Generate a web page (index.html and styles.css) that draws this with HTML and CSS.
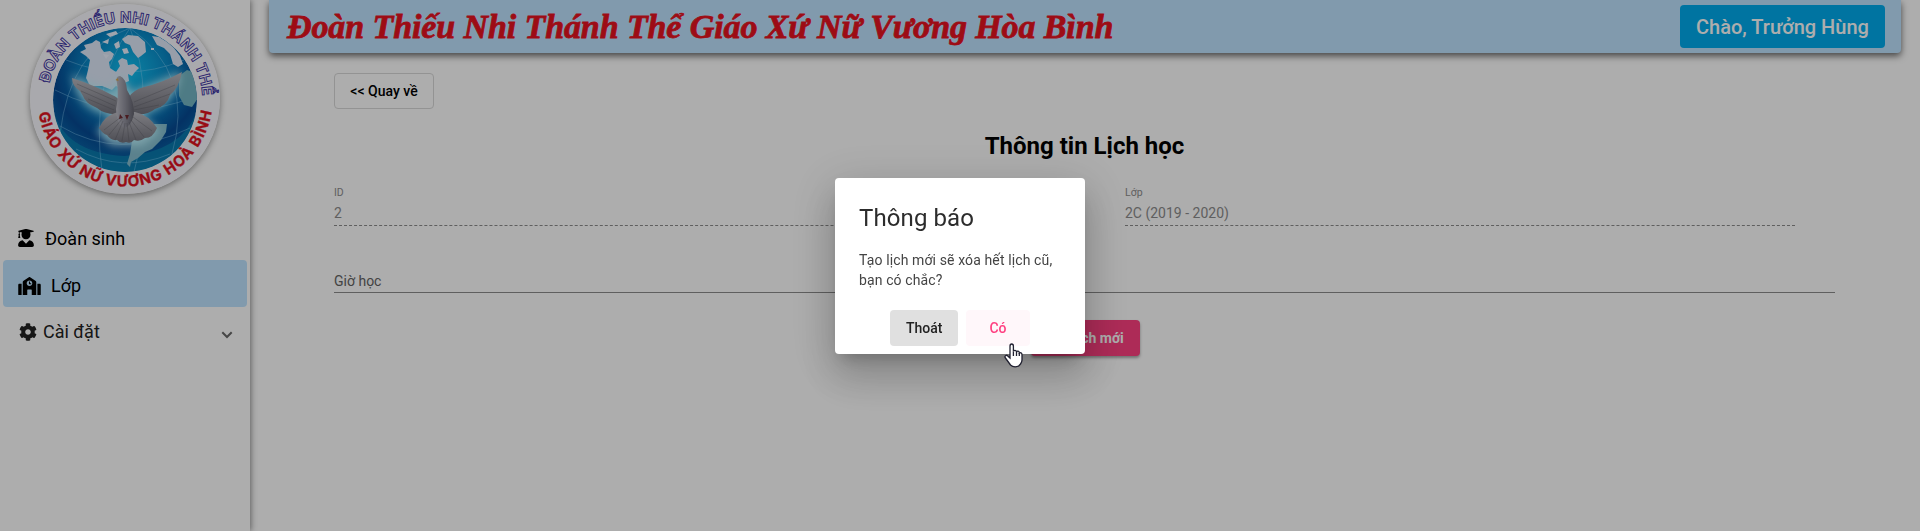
FILE: index.html
```html
<!DOCTYPE html>
<html lang="vi">
<head>
<meta charset="utf-8">
<title>Thông tin Lịch học</title>
<link rel="stylesheet" href="styles.css">
</head>
<body>
<div class="app">
  <aside class="sidebar">
    <svg class="logo" viewBox="0 0 190 190" width="190" height="190">
      <defs>
        <radialGradient id="sea" cx=".52" cy=".3" r=".68">
          <stop offset="0" stop-color="#12c2f2"/>
          <stop offset=".4" stop-color="#0a8cca"/>
          <stop offset=".75" stop-color="#064a94"/>
          <stop offset="1" stop-color="#0b6fae"/>
        </radialGradient>
        <linearGradient id="wing" x1="0" y1="0" x2="0" y2="1">
          <stop offset="0" stop-color="#b9b9c0"/>
          <stop offset="1" stop-color="#72727c"/>
        </linearGradient>
        <linearGradient id="body" x1="0" y1="0" x2="1" y2="0">
          <stop offset="0" stop-color="#bcbcc6"/>
          <stop offset=".5" stop-color="#92929e"/>
          <stop offset="1" stop-color="#62626e"/>
        </linearGradient>
        <clipPath id="globe"><circle cx="95" cy="96" r="72"/></clipPath>
        <filter id="glow" x="-30%" y="-30%" width="160%" height="160%"><feGaussianBlur stdDeviation="4"/></filter>
        <path id="arcTop" d="M17.6 92A77.5 77.5 0 0 1 172.4 92"/>
        <path id="arcBottom" d="M7.5 95A87.5 87.5 0 0 0 182.5 95"/>
      </defs>
      <circle cx="95" cy="95" r="95" fill="#fafaff"/>
      <g clip-path="url(#globe)">
        <circle cx="95" cy="96" r="72" fill="url(#sea)"/>
        <path d="M22 100Q30 148 94 152Q154 148 168 104L166 170H26Z" fill="#0a86b4" opacity=".7"/>
        <g fill="none" stroke="#9bdcff" stroke-width=".7" opacity=".55">
          <path d="M100 24Q60 80 72 167M100 24Q40 45 30 130M100 24Q125 90 104 168M100 24Q165 70 142 150M36 56Q95 80 154 56M25 86Q95 122 166 92M30 122Q90 158 160 124M46 145Q92 170 140 150"/>
        </g>
        <path d="M50 48L56 45L54 41L62 39L66 36L70 38L71 44L74 48L80 47L84 50L82 55L79 58L80 64L86 68L90 62L88 57L92 54L97 56L98 61L104 60L109 64L105 68L102 72L98 70L99 77L92 80L90 84L86 82L82 86L72 82L60 82L56 74L58 66L60 56L56 52Z" fill="#dfe9fa"/>
        <path d="M92 35L98 31L108 32L115 38L116 48L111 52L108 54L103 48L100 41L95 39ZM122 32L129 33L137 38L144 44L150 52L153 60L148 63L143 60L140 50L134 44L127 41Z" fill="#dfe9fa"/>
        <path d="M76 30L86 27L88 30L80 33ZM72 38L79 35L78 40ZM84 40L89 37L90 43L86 45ZM92 45L97 44L99 49L94 50ZM73 50L79 51L76 55ZM121 44L124 44L124 46L121 46Z" fill="#eaf2ff"/>
        <path d="M149 72L157 66L163 68L168 94L162 103L154 101L149 92Z" fill="#74b6c4"/>
        <path d="M102 137L112 126L122 120L137 120L136 128L131 136L122 145L115 148L108 154L101 158L100 163L97 160L100 150Z" fill="#86bfd0"/>
        <path d="M44 73Q60 83 82 88L90 74L102 90L149 70Q145 102 108 110L128 127L112 140H82L69 128L84 110Q51 108 44 73Z" fill="#bdf4ff" stroke="#bdf4ff" stroke-width="3" opacity=".9" filter="url(#glow)"/>
      </g>
      <path d="M42 74Q64 81 82 91Q88 93 91 99L89 110Q75 111 67 104Q55 99 53 92L50 87Q42 82 42 74Z" fill="url(#wing)"/>
      <path d="M152 68Q132 79 114 83Q103 86 98 94L100 109Q115 113 125 105Q137 102 140 91Q149 84 152 68Z" fill="url(#wing)"/>
      <path d="M88 108Q75 111 69 124Q73 130 77 131Q81 137 87 136Q91 140 96 138Q101 140 104 136Q110 138 115 134Q123 134 127 124Q119 111 105 108Z" fill="url(#wing)"/>
      <path d="M87 79Q85 72 90 72Q96 74 97 86Q104 97 104 110Q101 123 94 124Q86 119 86 105Q89 91 87 79Z" fill="url(#body)"/>
      <g fill="none" stroke="#55555f" stroke-width=".5" opacity=".7">
        <path d="M47 80L86 97M51 87L85 102M58 95L84 106M145 81L104 98M140 90L104 103M129 101L104 106M74 126L91 113M79 131L92 115M85 136L93 117M92 137L95 119M99 137L97 119M106 136L99 118M114 133L101 116M122 127L103 113"/>
      </g>
      <path d="M88 74L85.500 76L88.500 77Z" fill="#d9a545"/>
      <path d="M90 110L93 114L89 115ZM95 111H99L97 116Z" fill="#6d2b32"/>
      <text class="logo-top"><textPath href="#arcTop" startOffset="13" textLength="222">ĐOÀN THIẾU NHI THÁNH THỂ</textPath></text>
      <text class="logo-bottom"><textPath href="#arcBottom" startOffset="14" textLength="248">GIÁO XỨ NỮ VƯƠNG HOÀ BÌNH</textPath></text>
    </svg>
    <nav class="menu">
      <a class="item">
        <svg class="icon student" viewBox="0 0 448 512"><path d="M319.400 320.600L224 416l-95.400-95.400C57.100 323.700 0 382.200 0 454.400v9.600c0 26.500 21.500 48 48 48h352c26.500 0 48-21.500 48-48v-9.600c0-72.200-57.100-130.700-128.600-133.800zM13.600 79.800l6.400 1.500v58.400c-7 4.200-12 11.500-12 20.300 0 8.400 4.600 15.400 11.100 19.700L3.500 242c-1.700 6.900 2.100 14 7.600 14h41.800c5.500 0 9.300-7.100 7.600-14l-15.600-62.300C51.400 175.400 56 168.400 56 160c0-8.800-5-16.100-12-20.300V87.100l66 15.900c-8.600 17.200-14 36.400-14 57 0 70.700 57.300 128 128 128s128-57.300 128-128c0-20.600-5.300-39.800-14-57l96.300-23.200c18.200-4.400 18.200-27.100 0-31.500l-190.400-46c-13-3.100-26.700-3.100-39.700 0L13.600 48.200c-18.100 4.400-18.100 27.200 0 31.600z"/></svg>
        <span>Đoàn sinh</span>
      </a>
      <a class="item active">
        <svg class="icon school" viewBox="0 0 640 512"><path d="M0 224v272c0 8.800 7.200 16 16 16h80V192H32c-17.700 0-32 14.300-32 32zm360-48h-24v-40c0-4.400-3.600-8-8-8h-16c-4.400 0-8 3.600-8 8v64c0 4.400 3.600 8 8 8h48c4.400 0 8-3.600 8-8v-16c0-4.400-3.600-8-8-8zm137.700-63.900l-160-106.600a32 32 0 0 0-35.500 0l-160 106.600A32 32 0 0 0 128 138.700V512h128V368c0-8.800 7.200-16 16-16h96c8.800 0 16 7.200 16 16v144h128V138.700c0-10.700-5.300-20.700-14.300-26.600zM320 256c-44.200 0-80-35.800-80-80s35.800-80 80-80 80 35.800 80 80-35.800 80-80 80zm288-64h-64v320h80c8.800 0 16-7.200 16-16V224c0-17.700-14.300-32-32-32z"/></svg>
        <span>Lớp</span>
      </a>
      <a class="item settings">
        <svg class="icon gear" viewBox="0 0 512 512"><path d="M487.400 315.700l-42.600-24.600c4.300-23.200 4.300-47 0-70.200l42.600-24.600c4.900-2.800 7.100-8.600 5.500-14-11.100-35.600-30-67.800-54.700-94.600-3.800-4.100-10-5.100-14.800-2.300L380.800 110c-17.900-15.400-38.500-27.300-60.800-35.100V25.800c0-5.600-3.900-10.500-9.400-11.700-36.700-8.200-74.300-7.800-109.200 0-5.500 1.200-9.400 6.100-9.400 11.700V75c-22.200 7.900-42.800 19.800-60.800 35.100L88.700 85.500c-4.900-2.800-11-1.900-14.800 2.300-24.700 26.700-43.600 58.900-54.700 94.600-1.700 5.400.6 11.200 5.500 14L67.300 221c-4.300 23.200-4.300 47 0 70.200l-42.600 24.600c-4.900 2.800-7.100 8.600-5.500 14 11.100 35.600 30 67.800 54.700 94.600 3.800 4.100 10 5.100 14.800 2.300l42.600-24.600c17.900 15.400 38.500 27.300 60.800 35.100v49.200c0 5.600 3.900 10.500 9.400 11.700 36.700 8.200 74.300 7.800 109.200 0 5.500-1.200 9.400-6.100 9.400-11.700v-49.200c22.200-7.900 42.800-19.800 60.800-35.100l42.600 24.600c4.900 2.800 11 1.900 14.800-2.300 24.700-26.700 43.600-58.900 54.700-94.600 1.500-5.500-.7-11.300-5.600-14.100zM256 336c-44.100 0-80-35.900-80-80s35.900-80 80-80 80 35.900 80 80-35.900 80-80 80z"/></svg>
        <span>Cài đặt</span>
        <svg class="chevron" viewBox="0 0 12 8" width="12" height="8"><path d="M1.300 1.300L6 6L10.700 1.300"/></svg>
      </a>
    </nav>
  </aside>
  <main class="main">
    <header class="topbar">
      <h1 class="brand">Đoàn Thiếu Nhi Thánh Thể Giáo Xứ Nữ Vương Hòa Bình</h1>
      <button class="user">Chào, Trưởng Hùng</button>
    </header>
    <section class="content">
      <button class="back">&lt;&lt; Quay về</button>
      <h2 class="title">Thông tin Lịch học</h2>
      <div class="fields">
        <div class="field"><label>ID</label><span>2</span></div>
        <div class="field"><label>Lớp</label><span>2C (2019 - 2020)</span></div>
      </div>
      <div class="hours">Giờ học</div>
      <div class="actions"><button class="create">Tạo lịch mới</button></div>
    </section>
  </main>
</div>
<div class="backdrop">
  <div class="dialog">
    <h3>Thông báo</h3>
    <p>Tạo lịch mới sẽ xóa hết lịch cũ, bạn có chắc?</p>
    <div class="dialog-actions">
      <button class="cancel">Thoát</button>
      <button class="confirm">Có
        <svg class="cursor" viewBox="0 0 19 25" width="19" height="25"><path d="M6 15V3.200Q6 1 7.700 1T9.400 3.200V8.500Q9.500 7.200 11 7.300T12.500 9Q12.800 8 14.100 8.200T15.300 10Q18 9 18 12V17Q18 19 16.500 21L14.500 23.200Q9.500 24.800 6.500 22L1.800 15.500Q.2 13.700 1.500 12.700T4 13.200Z"/><path d="M9.400 8.500V13M12.500 9V13M15.300 10V13"/></svg>
      </button>
    </div>
  </div>
</div>
</body>
</html>
```
FILE: styles.css
```css
* { box-sizing: border-box; }
body {
  margin: 0;
  height: 531px;
  overflow: hidden;
  background: #fff;
  font-family: Roboto, "Noto Sans", sans-serif;
  color: #000;
}
h1, h2, h3, p { margin: 0; }
button { font: 500 14px/36px Roboto, sans-serif; border: 0; border-radius: 4px; padding: 0 16px; }

.app { display: flex; height: 531px; }
.sidebar {
  width: 250px;
  flex: none;
  padding-top: 4px;
  box-shadow: 1px 0 6px rgba(0, 0, 0, .45);
}
.logo {
  display: block;
  margin: 0 auto;
  border-radius: 50%;
  box-shadow: 0 2px 6px rgba(0, 0, 0, .4);
}
.logo text { font-family: Inter, sans-serif; font-weight: 700; }
.logo-top { font-size: 15px; fill: #fff; stroke: #3f35a4; stroke-width: .9px; }
.logo-bottom { font-size: 15px; fill: #e1131f; stroke: #e1131f; stroke-width: .3px; }

.menu { padding: 19px 3px 0; }
.item {
  display: flex;
  align-items: center;
  height: 47px;
  padding: 3px 15px 0;
  border-radius: 4px;
  font-size: 18px;
}
.item.active { background: #bfe4ff; padding-top: 4px; }
.icon { flex: none; height: 18px; }
.student { width: 16px; margin-right: 11px; }
.school { width: 23px; margin-right: 10px; }
.gear { width: 18px; margin: 0 6px 0 1px; }
.settings { color: #222; fill: #222; padding: 2px 14px 0 15px; }
.chevron { margin: 6px 0 0 auto; fill: none; stroke: #686868; stroke-width: 2; }

.main { flex: 1; padding: 0 19px; }
.topbar {
  display: flex;
  justify-content: space-between;
  align-items: center;
  height: 53px;
  padding: 0 16px 0 18px;
  background: #bfe4ff;
  border-radius: 0 0 4px 4px;
  box-shadow: 0 3px 7px rgba(0, 0, 0, .6);
}
.brand {
  font: italic 700 34px/53px "Liberation Serif", serif;
  letter-spacing: -.1px;
  white-space: nowrap;
  color: #e8121f;
  -webkit-text-stroke: .8px #e8121f;
}
.user {
  width: 205px;
  height: 43px;
  padding: 0;
  font-size: 20px;
  line-height: 44px;
  color: #fff;
  background: #00acee;
}
.content { width: 1501px; margin: 20px 0 0 65px; }
.back { background: #fff; border: 1px solid #d9d9d9; padding: 0 15px; line-height: 34px; width: 100px; white-space: nowrap; }
.title { margin-top: 21px; text-align: center; font-size: 24px; line-height: 32px; font-weight: 700; }
.fields { display: flex; gap: 121px; margin-top: 24px; }
.field {
  width: 670px;
  height: 40px;
  border-bottom: 1px dashed #8c8c8c;
  color: #8d8d8d;
}
.field label { display: block; font-size: 10.500px; line-height: 14px; }
.field span { display: block; font-size: 14px; line-height: 26px; }
.hours {
  height: 67px;
  padding-top: 43px;
  border-bottom: 1px solid #8c8c8c;
  font-size: 14px;
  line-height: 24px;
  color: #646464;
}
.actions { display: flex; margin: 27px 0 0 697px; }
.create {
  width: 109px;
  padding: 0;
  color: #fff;
  background: #ff4081;
  font-weight: 700;
  box-shadow: 0 2px 3px rgba(0, 0, 0, .35);
}

.backdrop {
  position: fixed;
  inset: 0;
  display: flex;
  align-items: center;
  justify-content: center;
  padding-top: 1px;
  background: rgba(0, 0, 0, .32);
}
.dialog {
  width: 250px;
  height: 176px;
  padding: 24px 24px 0;
  background: #fff;
  border-radius: 4px;
  box-shadow: 0 11px 15px -7px rgba(0, 0, 0, .2), 0 24px 38px 3px rgba(0, 0, 0, .14), 0 9px 46px 8px rgba(0, 0, 0, .12);
}
.dialog h3 { font-size: 24px; line-height: 32px; font-weight: 400; color: #2c2c2c; letter-spacing: .1px; }
.dialog p { margin: 16px -4px 0 0; font-size: 14px; line-height: 20px; color: #444; letter-spacing: .12px; }
.dialog-actions { display: flex; justify-content: center; gap: 8px; margin-top: 20px; }
.cancel { width: 68px; background: #e0e0e0; color: #222; }
.confirm { position: relative; width: 64px; background: #fff7fa; color: #ff4081; }
.cursor { position: absolute; left: 38px; top: 33px; fill: #fff; stroke: #202030; stroke-width: 1.300; }
```
